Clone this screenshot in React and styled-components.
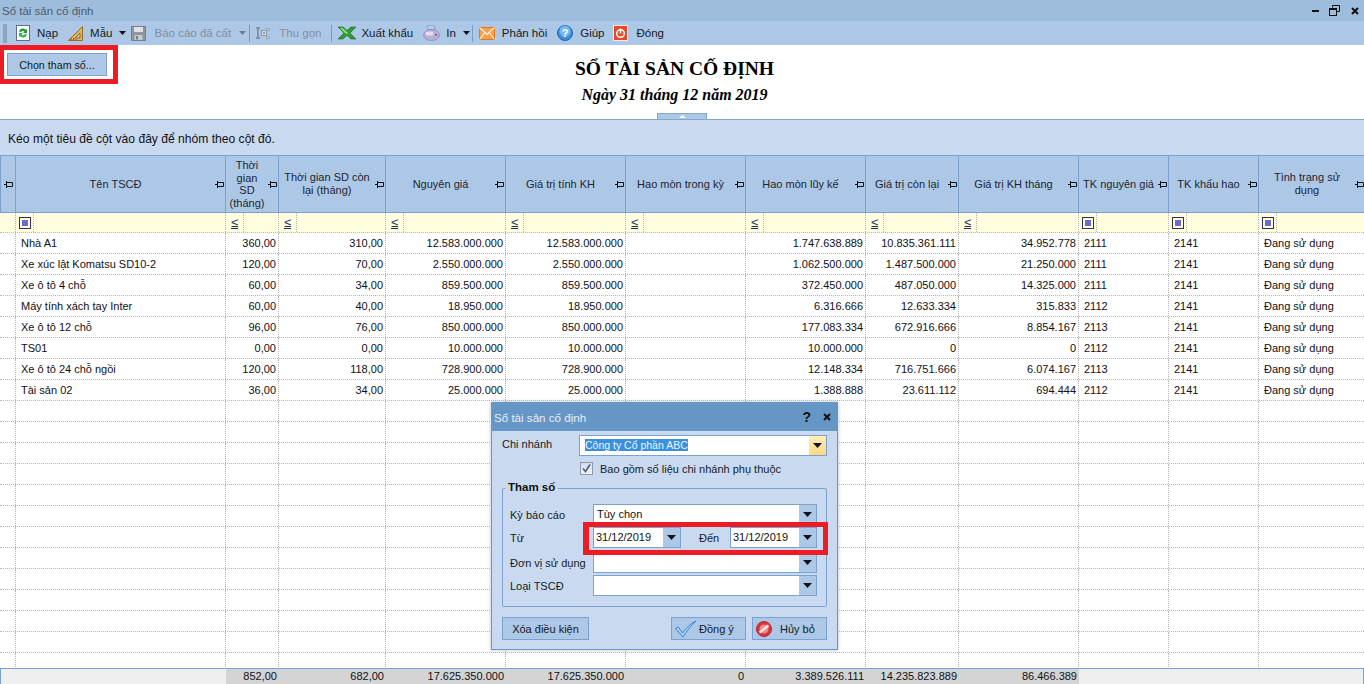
import React from 'react';
import styled, { createGlobalStyle } from 'styled-components';

const GlobalStyle = createGlobalStyle`
  html, body { margin: 0; padding: 0; background: #fff; }
  body { font-family: "Liberation Sans", Arial, sans-serif; font-size: 11px; color: #1a1a1a; }
  * { box-sizing: border-box; }
`;

const columns = [
  { label: 'Tên TSCĐ', width: 210, align: 'left', filter: 'check' },
  { label: 'Thời gian SD (tháng)', width: 53, align: 'right', filter: 'op', narrow: true },
  { label: 'Thời gian SD còn lại (tháng)', width: 107, align: 'right', filter: 'op' },
  { label: 'Nguyên giá', width: 120, align: 'right', filter: 'op' },
  { label: 'Giá trị tính KH', width: 120, align: 'right', filter: 'op' },
  { label: 'Hao mòn trong kỳ', width: 120, align: 'right', filter: 'op' },
  { label: 'Hao mòn lũy kế', width: 120, align: 'right', filter: 'op' },
  { label: 'Giá trị còn lại', width: 93, align: 'right', filter: 'op' },
  { label: 'Giá trị KH tháng', width: 120, align: 'right', filter: 'op' },
  { label: 'TK nguyên giá', width: 90, align: 'left', filter: 'check' },
  { label: 'TK khấu hao', width: 90, align: 'left', filter: 'check' },
  { label: 'Tình trạng sử dụng', width: 106, align: 'left', filter: 'check' },
];

const GRID = `16px ${columns.map((c) => `${c.width}px`).join(' ')}`;

const rows = [
  ['Nhà A1', '360,00', '310,00', '12.583.000.000', '12.583.000.000', '', '1.747.638.889', '10.835.361.111', '34.952.778', '2111', '2141', 'Đang sử dụng'],
  ['Xe xúc lật Komatsu SD10-2', '120,00', '70,00', '2.550.000.000', '2.550.000.000', '', '1.062.500.000', '1.487.500.000', '21.250.000', '2111', '2141', 'Đang sử dụng'],
  ['Xe ô tô 4 chỗ', '60,00', '34,00', '859.500.000', '859.500.000', '', '372.450.000', '487.050.000', '14.325.000', '2111', '2141', 'Đang sử dụng'],
  ['Máy tính xách tay Inter', '60,00', '40,00', '18.950.000', '18.950.000', '', '6.316.666', '12.633.334', '315.833', '2112', '2141', 'Đang sử dụng'],
  ['Xe ô tô 12 chỗ', '96,00', '76,00', '850.000.000', '850.000.000', '', '177.083.334', '672.916.666', '8.854.167', '2113', '2141', 'Đang sử dụng'],
  ['TS01', '0,00', '0,00', '10.000.000', '10.000.000', '', '10.000.000', '0', '0', '2112', '2141', 'Đang sử dụng'],
  ['Xe ô tô 24 chỗ ngồi', '120,00', '118,00', '728.900.000', '728.900.000', '', '12.148.334', '716.751.666', '6.074.167', '2113', '2141', 'Đang sử dụng'],
  ['Tài sản 02', '36,00', '34,00', '25.000.000', '25.000.000', '', '1.388.888', '23.611.112', '694.444', '2112', '2141', 'Đang sử dụng'],
];

const totals = ['', '852,00', '682,00', '17.625.350.000', '17.625.350.000', '0', '3.389.526.111', '14.235.823.889', '86.466.389', '', '', ''];

const emptyRow = columns.map(() => '');
const allRows = [...rows, ...Array.from({ length: 13 }, () => emptyRow)];

/* ---------- icons ---------- */

const Pin = () => (
  <PinSvg width="9" height="9" viewBox="0 0 9 9">
    <path d="M0 4.500h2.500M2.500 1v7M2.500 2.500h6v4h-6" fill="none" stroke="#10141c" strokeWidth="1" />
  </PinSvg>
);

const ReloadIcon = () => (
  <svg width="14" height="16" viewBox="0 0 14 16">
    <rect x="0.500" y="0.500" width="13" height="15" fill="#fbfbff" stroke="#5d6f96" />
    <path d="M3 6.500a4 4 0 0 1 7-1.500l1-1v4h-4l1.500-1.400a2 2 0 0 0-3.500.400z" fill="#1e9a2d" />
    <path d="M11 9.500a4 4 0 0 1-7 1.500l-1 1v-4h4l-1.500 1.400a2 2 0 0 0 3.500-.400z" fill="#2fb63f" />
  </svg>
);

const RulerIcon = () => (
  <svg width="16" height="15" viewBox="0 0 16 15">
    <path d="M14.500 0.500v14H0.500z" fill="#e2b25c" stroke="#9a6a24" />
    <path d="M12 7v5H7z" fill="#adc8e6" stroke="#9a6a24" />
    <path d="M3 14v-2M5.500 14v-2M8 14v-1" stroke="#7c4f14" />
  </svg>
);

const SaveIcon = () => (
  <svg width="15" height="15" viewBox="0 0 15 15">
    <path d="M0.500 0.500h14v14h-14z" fill="#8e949b" stroke="#7b8087" />
    <rect x="3" y="1" width="9" height="5" fill="#dfe2e6" />
    <rect x="3.500" y="9" width="8" height="5" fill="#c6cace" />
    <rect x="5" y="10" width="2" height="3.500" fill="#7b8087" />
  </svg>
);

const TreeIcon = () => (
  <svg width="16" height="15" viewBox="0 0 16 15">
    <path d="M1 2h4M3 2v10M1 12h4" fill="none" stroke="#7f878f" strokeWidth="1.600" />
    <rect x="6.500" y="4.500" width="5" height="5" fill="#d5dde6" stroke="#8f98a1" />
    <path d="M8 7h2M9 6v2" stroke="#7f878f" />
    <path d="M11.500 2.500h3v2h-3zM11.500 10.500h3v2h-3z" fill="#d5dde6" stroke="#9aa3ac" />
  </svg>
);

const ExcelIcon = () => (
  <svg width="18" height="14" viewBox="0 0 18 14">
    <path d="M0 1h5l4 3.500L13 1h5l-6 6 6 6h-5L9 9.500 5 13H0l6-6z" fill="#2f9a36" stroke="#1a6d22" strokeWidth="0.600" />
    <path d="M2 2h2.500l4.500 4 1 1-1 1-2-1z" fill="#8fdc7c" />
  </svg>
);

const PrinterIcon = () => (
  <svg width="17" height="16" viewBox="0 0 17 16">
    <path d="M4 1l7-1 1 4-7 1z" fill="#a9d2f4" stroke="#7a8fb8" strokeWidth="0.600" />
    <ellipse cx="8.500" cy="10" rx="8" ry="5.500" fill="#b9aed6" stroke="#8678ad" strokeWidth="0.600" />
    <ellipse cx="6.500" cy="8.500" rx="4" ry="2" fill="#e3dcf2" />
    <rect x="12" y="9" width="2" height="1.600" fill="#6a5c94" />
  </svg>
);

const MailIcon = () => (
  <svg width="16" height="13" viewBox="0 0 16 13">
    <rect x="0.500" y="0.500" width="15" height="12" fill="#f7a14a" stroke="#e07a1c" />
    <path d="M0.500 0.500L8 7.500l7.500-7M0.500 12.500L6 5.500M15.500 12.500L10 5.500" fill="none" stroke="#fff3e2" strokeWidth="1.100" />
  </svg>
);

const HelpIcon = () => (
  <svg width="16" height="16" viewBox="0 0 16 16">
    <circle cx="8" cy="8" r="7.500" fill="#3f8fd8" stroke="#1d5fa6" />
    <circle cx="8" cy="6" r="5.500" fill="#79b8ee" />
    <text x="8" y="12" textAnchor="middle" fontFamily="Liberation Sans" fontWeight="700" fontSize="11" fill="#fff">?</text>
  </svg>
);

const PowerIcon = () => (
  <svg width="15" height="16" viewBox="0 0 15 16">
    <rect x="0.500" y="0.500" width="14" height="15" fill="#e8492a" stroke="#f5e8df" />
    <circle cx="7.500" cy="8.500" r="3.800" fill="none" stroke="#fff" strokeWidth="1.500" />
    <path d="M7.500 3.500v5" stroke="#fff" strokeWidth="1.500" />
  </svg>
);

const CaretSmall = ({ $muted }) => (
  <svg width="7" height="4" viewBox="0 0 7 4">
    <path d="M0 0h7L3.500 4z" fill={$muted ? '#6d7f94' : '#10141c'} />
  </svg>
);

const WindowButtons = () => (
  <WindowControls>
    <svg width="7" height="3" viewBox="0 0 7 3"><rect width="7" height="2" y="1" fill="#111" /></svg>
    <svg width="11" height="11" viewBox="0 0 11 11">
      <path d="M3.500 2.500V.5h7v6H8" fill="none" stroke="#111" />
      <rect x="0.500" y="3.500" width="7" height="7" fill="none" stroke="#111" />
      <rect x="0" y="3" width="8" height="2" fill="#111" />
    </svg>
    <svg width="8" height="8" viewBox="0 0 8 8"><path d="M1 1l6 6M7 1L1 7" stroke="#111" strokeWidth="2" /></svg>
  </WindowControls>
);

const CheckMark = () => (
  <svg width="22" height="18" viewBox="0 0 22 18">
    <path d="M0.500 8.500l3-1.500 4 6C11 8 15 4 21 1c-5 4.500-9 9.500-13 16z" fill="#a9d0f2" stroke="#2e7fd0" strokeWidth="0.900" />
  </svg>
);

const CancelMark = () => (
  <svg width="16" height="16" viewBox="0 0 16 16">
    <circle cx="8" cy="8" r="7.500" fill="#d8343c" stroke="#b82830" />
    <circle cx="8" cy="8" r="4.500" fill="#f08a8a" />
    <path d="M3.500 11.500l9-7" stroke="#fbe6e6" strokeWidth="2.400" />
  </svg>
);

/* ---------- parts ---------- */

const ComboCaret = () => (
  <svg width="9" height="5" viewBox="0 0 9 5"><path d="M0 0h9L4.500 5z" fill="#10141c" /></svg>
);

const ComboField = ({ children, $hot, $selected, $width, $pad = 3 }) => (
  <Combo $width={$width}>
    <ComboText $pad={$pad}>{$selected ? <Selected>{children}</Selected> : children}</ComboText>
    <ComboButton $hot={$hot}><ComboCaret /></ComboButton>
  </Combo>
);

export default function App() {
  return (
    <Page>
      <GlobalStyle />
      <TitleBar>
        <span>Sổ tài sản cố định</span>
        <WindowButtons />
      </TitleBar>

      <Toolbar>
        <Grip />
        <ToolItem $left={9}><ReloadIcon /><ToolLabel $gap={7}>Nạp</ToolLabel></ToolItem>
        <ToolItem $left={10}><RulerIcon /><ToolLabel $gap={6}>Mẫu</ToolLabel></ToolItem>
        <ToolItem $left={7}><CaretSmall /></ToolItem>
        <ToolItem $left={5}><SaveIcon /><ToolLabel $gap={8} $muted>Báo cáo đã cất</ToolLabel></ToolItem>
        <ToolItem $left={8}><CaretSmall $muted /></ToolItem>
        <Separator $left={3} />
        <ToolItem $left={5}><TreeIcon /><ToolLabel $gap={8} $muted>Thu gọn</ToolLabel></ToolItem>
        <Separator $left={10} />
        <ToolItem $left={6}><ExcelIcon /><ToolLabel $gap={5}>Xuất khẩu</ToolLabel></ToolItem>
        <ToolItem $left={10}><PrinterIcon /><ToolLabel $gap={6}>In</ToolLabel></ToolItem>
        <ToolItem $left={7}><CaretSmall /></ToolItem>
        <Separator $left={2} />
        <ToolItem $left={6}><MailIcon /><ToolLabel $gap={7}>Phản hồi</ToolLabel></ToolItem>
        <ToolItem $left={10}><HelpIcon /><ToolLabel $gap={7}>Giúp</ToolLabel></ToolItem>
        <ToolItem $left={8}><PowerIcon /><ToolLabel $gap={9}>Đóng</ToolLabel></ToolItem>
      </Toolbar>

      <ReportHead>
        <HighlightFrame>
          <ParamButton>Chọn tham số...</ParamButton>
        </HighlightFrame>
        <ReportTitle>SỔ TÀI SẢN CỐ ĐỊNH</ReportTitle>
        <ReportDate>Ngày 31 tháng 12 năm 2019</ReportDate>
        <CollapseHandle>
          <svg width="7" height="3" viewBox="0 0 7 3"><path d="M0 3h7L3.500 0z" fill="#fff" /></svg>
        </CollapseHandle>
      </ReportHead>

      <GroupPanel>Kéo một tiêu đề cột vào đây để nhóm theo cột đó.</GroupPanel>

      <HeaderRow>
        <HeaderCell $corner><Pin /></HeaderCell>
        {columns.map((c) => (
          <HeaderCell key={c.label}>
            <HeaderLabel $narrow={c.narrow}>{c.label}</HeaderLabel>
            <Pin />
          </HeaderCell>
        ))}
      </HeaderRow>

      <FilterRow>
        <FilterCell />
        {columns.map((c) => (
          <FilterCell key={c.label}>
            <FilterOp>
              {c.filter === 'check' ? <FilterCheck /> : <OpText>≤</OpText>}
            </FilterOp>
          </FilterCell>
        ))}
      </FilterRow>

      <GridBody>
        {allRows.map((row, i) => (
          <DataRow key={i}>
            <DataCell />
            {row.map((value, j) => (
              <DataCell key={j} $align={columns[j].align}>{value}</DataCell>
            ))}
          </DataRow>
        ))}
      </GridBody>

      <FooterRow>
        <FooterCell />
        {totals.map((value, j) => (
          <FooterCell key={j} $sum={j > 0 && j < 9}>{value}</FooterCell>
        ))}
      </FooterRow>

      <Dialog>
        <DialogTitle>
          <span>Sổ tài sản cố định</span>
          <DialogActions>
            <DialogQuestion>?</DialogQuestion>
            <svg width="8" height="8" viewBox="0 0 8 8"><path d="M1 1l6 6M7 1L1 7" stroke="#111" strokeWidth="2" /></svg>
          </DialogActions>
        </DialogTitle>

        <DialogBody>
          <BranchRow>
            <BranchLabel>Chi nhánh</BranchLabel>
            <ComboField $hot $selected $width={248} $pad={5}>Công ty Cổ phần ABC</ComboField>
          </BranchRow>
          <CheckRow>
            <CheckBox>
              <svg width="11" height="11" viewBox="0 0 11 11"><path d="M2 5.500l2.500 3L9 1.500" fill="none" stroke="#4a62a8" strokeWidth="1.800" /></svg>
            </CheckBox>
            Bao gồm số liệu chi nhánh phụ thuộc
          </CheckRow>

          <ParamGroup>
            <GroupLegend>Tham số</GroupLegend>
            <ParamRow>
              <ParamLabel>Kỳ báo cáo</ParamLabel>
              <ComboField $width={224}>Tùy chọn</ComboField>
            </ParamRow>
            <ParamRow $top={2}>
              <ParamLabel>Từ</ParamLabel>
              <ComboField $width={88} $pad={2}>31/12/2019</ComboField>
              <ToLabel>Đến</ToLabel>
              <ComboField $width={87} $pad={2}>31/12/2019</ComboField>
            </ParamRow>
            <ParamRow $top={4}>
              <ParamLabel>Đơn vị sử dụng</ParamLabel>
              <ComboField $width={224} />
            </ParamRow>
            <ParamRow $top={2}>
              <ParamLabel>Loại TSCĐ</ParamLabel>
              <ComboField $width={224} />
            </ParamRow>
          </ParamGroup>

          <DialogFooter>
            <DialogButton $width={87} $center>Xóa điều kiện</DialogButton>
            <FooterSpacer />
            <DialogButton $width={75} $gap={2}><CheckMark />Đồng ý</DialogButton>
            <DialogButton $width={75} $gap={8}><CancelMark />Hủy bỏ</DialogButton>
          </DialogFooter>

          <DateHighlight />
        </DialogBody>
      </Dialog>
    </Page>
  );
}

/* ---------- styles ---------- */

const Page = styled.div`
  position: relative;
  width: 1364px;
  height: 684px;
  display: flex;
  flex-direction: column;
  overflow: hidden;
  background: #fff;
`;

const TitleBar = styled.div`
  height: 21px;
  flex: none;
  display: flex;
  align-items: center;
  justify-content: space-between;
  padding-left: 2px;
  background: #9ebcdb;
  color: #4d5b6c;
  font-size: 11.500px;
`;

const WindowControls = styled.div`
  display: flex;
  align-items: center;
  gap: 11px;
  padding-right: 5px;

  > svg:first-child { margin-right: -1px; }
`;

const Toolbar = styled.div`
  height: 24px;
  flex: none;
  display: flex;
  align-items: center;
  padding-left: 3px;
  background: #adc8e6;
`;

const Grip = styled.div`
  width: 4px;
  height: 19px;
  background-image: radial-gradient(#8aa3bf 0.7px, transparent 0.8px);
  background-size: 2px 2px;
`;

const ToolItem = styled.div`
  display: flex;
  align-items: center;
  margin-left: ${(p) => p.$left}px;
`;

const ToolLabel = styled.span`
  margin-left: ${(p) => p.$gap}px;
  font-size: 11.500px;
  color: ${(p) => (p.$muted ? '#7f8fa3' : '#141a24')};
`;

const Separator = styled.div`
  width: 1px;
  height: 17px;
  margin-left: ${(p) => p.$left}px;
  background: #6f9ed0;
`;

const ReportHead = styled.div`
  position: relative;
  height: 75px;
  flex: none;
  padding: 12px 15px 0 0;
  border-bottom: 1px solid #86a6cc;
  text-align: center;
  background: #fff;
`;

const HighlightFrame = styled.div`
  position: absolute;
  left: 0;
  top: 0;
  width: 118px;
  height: 39px;
  padding: 3px 0 0 3px;
  border: 5px solid #ed1c24;
  border-left-width: 4px;
`;

const ParamButton = styled.button`
  display: block;
  width: 100px;
  height: 23px;
  padding: 0;
  border: 1px solid #7ba2cf;
  background: #adc8e6;
  color: #141a24;
  font: 10.700px "Liberation Sans", Arial, sans-serif;
`;

const ReportTitle = styled.div`
  font-family: "Liberation Serif", "Times New Roman", serif;
  font-weight: 700;
  font-size: 19.500px;
  line-height: 24px;
  color: #000;
`;

const ReportDate = styled.div`
  margin-top: 3px;
  font-family: "Liberation Serif", "Times New Roman", serif;
  font-weight: 700;
  font-style: italic;
  font-size: 16px;
  line-height: 21px;
  color: #000;
`;

const CollapseHandle = styled.div`
  position: absolute;
  left: 657px;
  bottom: 0;
  width: 50px;
  height: 6px;
  display: flex;
  align-items: center;
  justify-content: center;
  background: #adc8e6;
  border: 1px solid #86a6cc;
  border-bottom: none;
`;

const GroupPanel = styled.div`
  height: 35px;
  flex: none;
  display: flex;
  align-items: center;
  padding: 2px 0 0 8px;
  background: #c9daf0;
  color: #111;
  font-size: 12.100px;
`;

const gridRow = `
  display: grid;
  grid-template-columns: ${GRID};
  flex: none;
`;

const HeaderRow = styled.div`
  ${gridRow}
  height: 58px;
  border-top: 1px solid #7ba2cf;
  border-bottom: 1px solid #7ba2cf;
  background: #adc8e6;
`;

const HeaderCell = styled.div`
  display: flex;
  align-items: center;
  justify-content: ${(p) => (p.$corner ? 'center' : 'flex-start')};
  padding-right: ${(p) => (p.$corner ? 0 : 1)}px;
  border-right: 1px solid #7ba2cf;
  border-left: ${(p) => (p.$corner ? '1px solid #7ba2cf' : 'none')};
  min-width: 0;

  &:last-child { border-right: none; }
`;

const HeaderLabel = styled.div`
  flex: 1;
  min-width: 0;
  padding: 0 ${(p) => (p.$narrow ? 3 : 2)}px;
  text-align: center;
  font-size: 11px;
  line-height: ${(p) => (p.$narrow ? 12.500 : 13)}px;
  color: #1c2633;
`;

const PinSvg = styled.svg`
  flex: none;
`;

const FilterRow = styled.div`
  ${gridRow}
  height: 20px;
  background: #ffffe0;
  border-bottom: 1px dotted #b5b5b5;
`;

const FilterCell = styled.div`
  display: flex;
  border-right: 1px dotted #b5b5b5;

  &:last-child { border-right: none; }
`;

const FilterOp = styled.div`
  width: 18px;
  display: flex;
  align-items: center;
  justify-content: center;
  border-right: 1px dotted #b5b5b5;
`;

const FilterCheck = styled.div`
  width: 12px;
  height: 12px;
  border: 1px solid #30305c;
  background: #6a6ad0;
  box-shadow: inset 0 0 0 2px #ffffe0;
`;

const OpText = styled.span`
  font-size: 13px;
  line-height: 12px;
  text-decoration: underline;
  color: #202a60;
`;

const GridBody = styled.div`
  flex: 1;
  min-height: 0;
  overflow: hidden;
`;

const DataRow = styled.div`
  ${gridRow}
  height: 21px;
  border-bottom: 1px dotted #b5b5b5;
`;

const DataCell = styled.div`
  padding: 0 ${(p) => (p.$align === 'right' ? 2 : 5)}px;
  text-align: ${(p) => p.$align || 'left'};
  line-height: 20px;
  font-size: 11px;
  white-space: nowrap;
  overflow: hidden;
  border-right: 1px dotted #b5b5b5;
  color: #101018;

  &:last-child { border-right: none; }
`;

const FooterRow = styled.div`
  ${gridRow}
  height: 16px;
  border-top: 1px solid #7ba2cf;
  background: #efefef;
  box-shadow: inset 1px 0 #7ba2cf, inset -1px 0 #7ba2cf;
`;

const FooterCell = styled.div`
  padding-right: 2px;
  text-align: right;
  line-height: 15px;
  font-size: 11px;
  color: #101018;
  background: ${(p) => (p.$sum ? '#d4d4d4' : 'transparent')};
  white-space: nowrap;
`;

const Dialog = styled.div`
  position: absolute;
  left: 491px;
  top: 402px;
  width: 347px;
  height: 248px;
  display: flex;
  flex-direction: column;
  border: 1px solid #6596c6;
  background: #c9daf0;
  box-shadow: 0 0 4px rgba(60, 80, 110, 0.35);
`;

const DialogTitle = styled.div`
  height: 28px;
  flex: none;
  display: flex;
  align-items: center;
  justify-content: space-between;
  padding: 0 6px 0 2px;
  background: #6596c6;
  color: #e6eef7;
  font-size: 11.600px;
`;

const DialogActions = styled.div`
  display: flex;
  align-items: center;
  gap: 12px;
`;

const DialogQuestion = styled.span`
  font-size: 14px;
  font-weight: 700;
  color: #111;
`;

const DialogBody = styled.div`
  position: relative;
  flex: 1;
  padding: 4px 10px 0 10px;
  font-size: 11px;
  color: #141c28;
`;

const BranchRow = styled.div`
  display: flex;
  align-items: flex-start;
`;

const BranchLabel = styled.div`
  width: 78px;
  line-height: 18px;
`;

const Combo = styled.div`
  width: ${(p) => p.$width}px;
  height: 21px;
  flex: none;
  display: flex;
  border: 1px solid #7ba2cf;
  background: #fff;
`;

const ComboText = styled.div`
  flex: 1;
  min-width: 0;
  padding-left: ${(p) => p.$pad}px;
  line-height: 18px;
  font-size: 11px;
  color: #111;
  white-space: nowrap;
`;

const Selected = styled.span`
  background: #3a8fe0;
  color: #eef5ff;
  font-size: 10.500px;
`;

const ComboButton = styled.div`
  width: 17px;
  flex: none;
  display: flex;
  align-items: center;
  justify-content: center;
  background: ${(p) => (p.$hot ? 'linear-gradient(#ffeeb8, #ffd884)' : '#adc8e6')};
`;

const CheckRow = styled.div`
  display: flex;
  align-items: center;
  gap: 7px;
  height: 13px;
  margin: 6px 0 0 78px;
`;

const CheckBox = styled.div`
  width: 13px;
  height: 13px;
  display: flex;
  align-items: center;
  justify-content: center;
  border: 1px solid #8f9bab;
  background: linear-gradient(#d9dde3, #f1f2f4);
`;

const ParamGroup = styled.div`
  position: relative;
  width: 325px;
  height: 119px;
  margin-top: 13px;
  padding: 15px 9px 0 7px;
  border: 1px solid #7ba2cf;
  border-radius: 2px;
`;

const GroupLegend = styled.div`
  position: absolute;
  left: 2px;
  top: -10px;
  padding: 0 3px;
  font-weight: 700;
  font-size: 11.500px;
  line-height: 16px;
  background: #c9daf0;
  color: #111;
`;

const ParamRow = styled.div`
  display: flex;
  align-items: center;
  margin-top: ${(p) => p.$top || 0}px;
`;

const ParamLabel = styled.div`
  width: 83px;
  flex: none;
  white-space: nowrap;
`;

const ToLabel = styled.div`
  width: 49px;
  padding-left: 18px;
  flex: none;
`;

const DialogFooter = styled.div`
  display: flex;
  gap: 6px;
  margin-top: 10px;
`;

const FooterSpacer = styled.div`
  flex: 1;
`;

const DialogButton = styled.button`
  width: ${(p) => p.$width}px;
  height: 23px;
  padding: 0 0 0 ${(p) => (p.$center ? 0 : 3)}px;
  display: flex;
  align-items: center;
  justify-content: ${(p) => (p.$center ? 'center' : 'flex-start')};
  gap: ${(p) => p.$gap || 0}px;
  border: 1px solid #7ba2cf;
  background: #adc8e6;
  color: #141a24;
  font: 11px "Liberation Sans", Arial, sans-serif;
`;

const DateHighlight = styled.div`
  position: absolute;
  left: 91px;
  top: 91px;
  width: 245px;
  height: 33px;
  border: 5px solid #ed1c24;
  border-left-width: 6px;
  pointer-events: none;
`;
